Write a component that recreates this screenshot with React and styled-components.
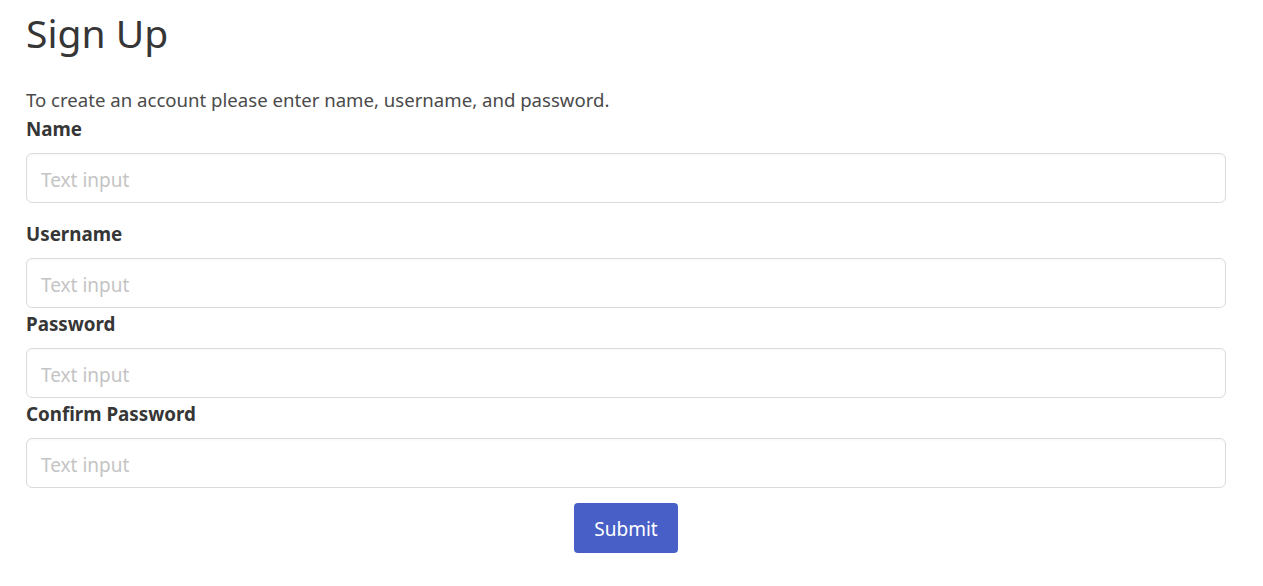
import React from "react";
import styled, { createGlobalStyle } from "styled-components";

const Global = createGlobalStyle`
  html, body { margin: 0; padding: 0; background: #fff; }
  body { font-family: "Noto Sans", "Open Sans", sans-serif; color: #4a4a4a; }
  * { box-sizing: border-box; }
`;

const Page = styled.div`
  padding: 10px 37px 0 26px;
  display: flex;
  flex-direction: column;
`;

const Title = styled.h1`
  margin: 0;
  font-size: 39px;
  line-height: 45px;
  font-weight: 400;
  color: #363636;
`;

const Intro = styled.p`
  margin: 33px 0 5px;
  font-size: 18.6px;
  line-height: 24px;
  color: #4a4a4a;
`;

const Field = styled.div`
  display: flex;
  flex-direction: column;
  margin-bottom: ${(p) => p.$gap}px;
`;

const Label = styled.label`
  font-size: 18.8px;
  line-height: 24px;
  font-weight: 700;
  color: #363636;
  margin-bottom: 12px;
`;

const Input = styled.input`
  height: 50px;
  width: 100%;
  border: 1px solid #dbdbdb;
  border-radius: 6px;
  padding: 4px 14px 0;
  font-family: inherit;
  font-size: 19px;
  color: #363636;
  background: #fff;
  box-shadow: inset 0 0.0625em 0.125em rgba(10, 10, 10, 0.03);
  outline: none;
  &::placeholder { color: #c4c4c4; }
`;

const Actions = styled.div`
  display: flex;
  justify-content: center;
  margin-top: 15px;
`;

const Button = styled.button`
  height: 50px;
  padding: 2px 20px 0;
  border: none;
  border-radius: 4px;
  background: #485fc7;
  color: #fff;
  font-family: inherit;
  font-size: 19px;
  cursor: pointer;
`;

const fields = [
  { label: "Name", gap: 19 },
  { label: "Username", gap: 4 },
  { label: "Password", gap: 4 },
  { label: "Confirm Password", gap: 0 },
];

export default function App() {
  return (
    <>
      <Global />
      <Page>
        <Title>Sign Up</Title>
        <Intro>To create an account please enter name, username, and password.</Intro>
        {fields.map((f) => (
          <Field key={f.label} $gap={f.gap}>
            <Label>{f.label}</Label>
            <Input type="text" placeholder="Text input" />
          </Field>
        ))}
        <Actions>
          <Button type="submit">Submit</Button>
        </Actions>
      </Page>
    </>
  );
}
